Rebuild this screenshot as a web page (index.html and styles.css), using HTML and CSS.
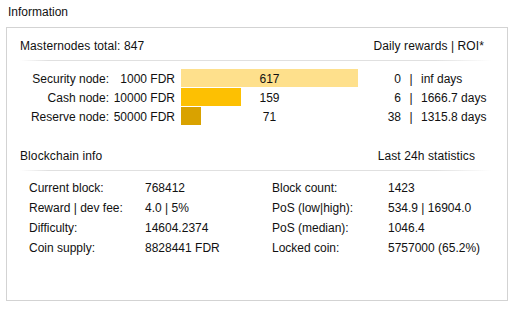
FILE: index.html
```html
<!DOCTYPE html>
<html lang="en">
  <head>
    <meta charset="UTF-8" />
    <title>Information</title>
    <link rel="stylesheet" href="styles.css">
  </head>
  <body>
    <div class="title">Information</div>

    <div class="panel">
      <!-- masternodes -->
      <div class="head">
        <span>Masternodes total: 847</span>
        <span>Daily rewards | ROI*</span>
      </div>
      <div class="sep"></div>

      <div class="nodes">
        <span class="label">Security node:</span>
        <span class="amount">1000 FDR</span>
        <div class="bar-cell">
          <div class="bar bar-security" style="width: 100%"></div>
          <span class="count">617</span>
        </div>
        <span class="reward">0</span>
        <span class="pipe">|</span>
        <span class="roi">inf days</span>

        <span class="label">Cash node:</span>
        <span class="amount">10000 FDR</span>
        <div class="bar-cell">
          <div class="bar bar-cash" style="width: 34%"></div>
          <span class="count">159</span>
        </div>
        <span class="reward">6</span>
        <span class="pipe">|</span>
        <span class="roi">1666.7 days</span>

        <span class="label">Reserve node:</span>
        <span class="amount">50000 FDR</span>
        <div class="bar-cell">
          <div class="bar bar-reserve" style="width: 11.5%"></div>
          <span class="count">71</span>
        </div>
        <span class="reward">38</span>
        <span class="pipe">|</span>
        <span class="roi">1315.8 days</span>
      </div>

      <!-- blockchain -->
      <div class="head head-chain">
        <span>Blockchain info</span>
        <span class="head-right">Last 24h statistics</span>
      </div>
      <div class="sep"></div>

      <div class="chain">
        <span>Current block:</span>
        <span>768412</span>
        <span>Block count:</span>
        <span>1423</span>

        <span>Reward | dev fee:</span>
        <span>4.0 | 5%</span>
        <span>PoS (low|high):</span>
        <span>534.9 | 16904.0</span>

        <span>Difficulty:</span>
        <span>14604.2374</span>
        <span>PoS (median):</span>
        <span>1046.4</span>

        <span>Coin supply:</span>
        <span>8828441 FDR</span>
        <span>Locked coin:</span>
        <span>5757000 (65.2%)</span>
      </div>
    </div>
  </body>
</html>
```

FILE: styles.css
```css
body {
  margin: 0;
  padding: 4px 5px 0 6px;
  font-family: 'Liberation Sans', Arial, sans-serif;
  font-size: 12px;
  line-height: 16px;
  color: #111;
  background-color: #fff;
}

.title {
  padding-left: 2px;
  margin-bottom: 7px;
}

.panel {
  width: 502px;
  height: 274px;
  box-sizing: border-box;
  border: 1px solid #d3d3d3;
  padding: 10px 23px 0 13px;
}

.head {
  display: flex;
  justify-content: space-between;
  letter-spacing: 0.1px;
}

.head-chain {
  margin-top: 22px;
}

.head-right {
  margin-right: 9px;
}

.sep {
  height: 1px;
  margin: 6px -8px 0 0;
  background: linear-gradient(to right, transparent, #e0e0e0 6%, #e0e0e0 88%, transparent);
}

/* node rows */
.nodes {
  display: grid;
  grid-template-columns: 89px 66px 183px 43px 20px 1fr;
  grid-auto-rows: 19px;
  margin-top: 8px;
  align-items: center;
  white-space: nowrap;
}

.label,
.amount,
.reward {
  text-align: right;
}

.bar-cell {
  position: relative;
  height: 19px;
  margin-left: 6px;
  display: flex;
  align-items: center;
  justify-content: center;
}

.bar {
  position: absolute;
  left: 0;
  top: 0;
  height: 18px;
}

.bar-security {
  background-color: #fee08c;
}

.bar-cash {
  background-color: #fdc002;
}

.bar-reserve {
  background-color: #d9a200;
}

.count {
  position: relative;
}

.pipe {
  text-align: center;
}

/* blockchain grid */
.chain {
  display: grid;
  grid-template-columns: 116px 127px 116px auto;
  grid-auto-rows: 20px;
  align-items: center;
  margin-top: 7px;
  padding-left: 9px;
}
```
